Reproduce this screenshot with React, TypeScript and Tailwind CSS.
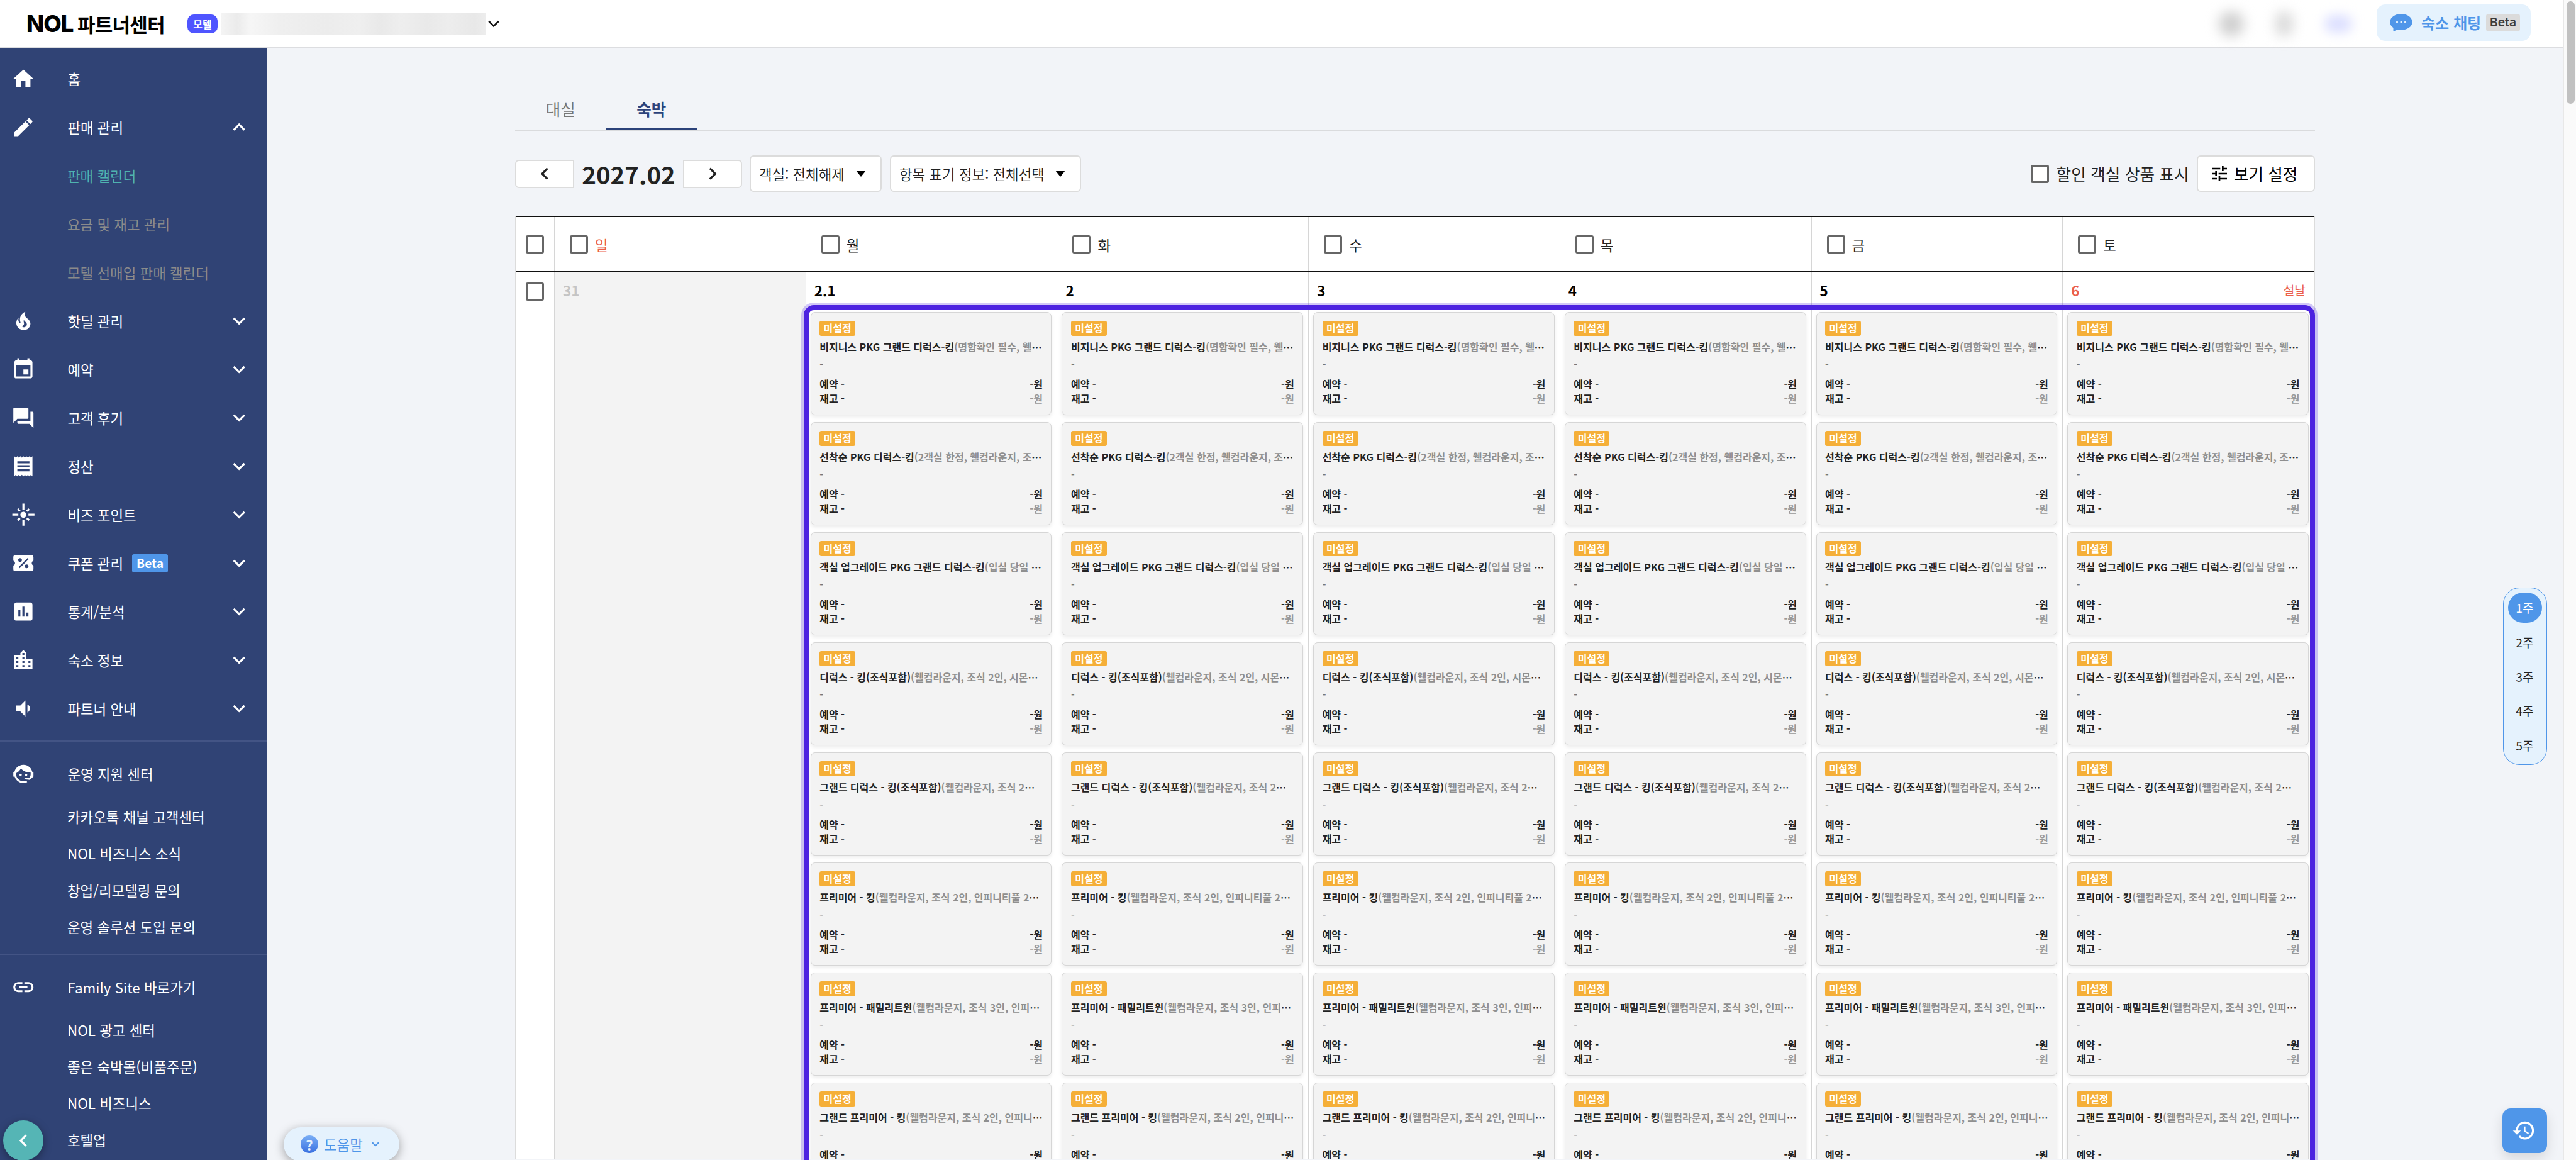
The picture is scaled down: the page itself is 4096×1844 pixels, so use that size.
import { clsx } from 'clsx'
import type { ReactNode } from 'react'
import type { IconType } from 'react-icons'
import {
  MdChevronLeft,
  MdChevronRight,
  MdEdit,
  MdEvent,
  MdExpandLess,
  MdExpandMore,
  MdFlare,
  MdForum,
  MdHistory,
  MdHome,
  MdInsertChart,
  MdLink,
  MdLocationCity,
  MdReceipt,
  MdTune,
  MdVolumeDown,
} from 'react-icons/md'

type IconComponent = IconType | ((props: { className?: string }) => ReactNode)

type MenuItem = {
  label: string
  icon: IconComponent
  expanded?: boolean
  leaf?: boolean
  beta?: boolean
  children?: { label: string; active?: boolean }[]
}

function FireIcon({ className }: { className?: string }) {
  return (
    <svg viewBox="0 0 24 24" fill="currentColor" className={className}>
      <path d="M17.66 11.2c-.23-.3-.51-.56-.77-.82-.67-.6-1.43-1.03-2.07-1.66C13.33 7.26 13 4.85 13.95 3c-.95.23-1.78.75-2.49 1.32-2.59 2.08-3.61 5.75-2.39 8.9.04.1.08.2.08.33 0 .22-.15.42-.35.5-.23.1-.47.04-.66-.12a.58.58 0 0 1-.14-.17c-1.13-1.43-1.31-3.48-.55-5.12C5.78 10 4.87 12.3 5 14.47c.06.5.12 1 .29 1.5.14.6.41 1.2.71 1.73 1.08 1.73 2.95 2.97 4.96 3.22 2.14.27 4.43-.12 6.07-1.6 1.83-1.66 2.47-4.32 1.53-6.6l-.13-.26c-.21-.46-.77-1.26-.77-1.26m-3.16 6.3c-.28.24-.74.5-1.1.6-1.12.4-2.24-.16-2.9-.82 1.19-.28 1.9-1.16 2.11-2.05.17-.8-.15-1.46-.28-2.23-.12-.74-.1-1.37.17-2.06.19.38.39.76.63 1.06.77 1 1.98 1.44 2.24 2.8.04.14.06.28.06.43.03.82-.33 1.72-.93 2.27Z" />
    </svg>
  )
}

function CouponIcon({ className }: { className?: string }) {
  return (
    <svg viewBox="0 0 24 24" fill="currentColor" className={className}>
      <path
        fillRule="evenodd"
        d="M20 4H4a2 2 0 0 0-2 2v3.6c1 .5 1.7 1.3 1.7 2.4S3 13.900 2 14.4V18a2 2 0 0 0 2 2h16a2 2 0 0 0 2-2v-3.6c-1-.5-1.7-1.3-1.7-2.4s.7-1.9 1.7-2.4V6a2 2 0 0 0-2-2ZM8.7 7a1.85 1.85 0 1 1 0 3.7 1.85 1.85 0 0 1 0-3.7Zm7.5-.1 1.1 1.1-9 9-1.1-1.1 9-9Zm-1 6.4a1.85 1.85 0 1 1 0 3.7 1.85 1.85 0 0 1 0-3.7Z"
      />
    </svg>
  )
}

function AgentIcon({ className }: { className?: string }) {
  return (
    <svg viewBox="0 0 24 24" fill="currentColor" className={className}>
      <path d="M18.72 14.76C19.07 13.91 19.26 13 19.26 12C19.26 11.28 19.15 10.59 18.96 9.95C18.31 10.1 17.63 10.18 16.92 10.18C13.86 10.18 11.15 8.67 9.5 6.34C8.61 8.5 6.91 10.26 4.77 11.22C4.73 11.47 4.73 11.74 4.73 12A7.27 7.27 0 0 0 12 19.27C13.05 19.27 14.06 19.04 14.97 18.63C15.54 19.72 15.8 20.26 15.78 20.26C14.14 20.81 12.87 21.08 12 21.08C9.58 21.08 7.27 20.13 5.57 18.42C4.53 17.38 3.76 16.11 3.33 14.73H2V10.18H3.09C3.93 6.04 7.6 2.92 12 2.92C14.4 2.92 16.71 3.87 18.42 5.58C19.69 6.84 20.54 8.45 20.89 10.18H22V14.73H21.94L18.38 18L13.08 17.4V15.73H17.91L18.72 14.76Z" />
      <circle cx="9.27" cy="13" r="1.15" />
      <circle cx="14.73" cy="13" r="1.15" />
    </svg>
  )
}

function ChatIcon({ className }: { className?: string }) {
  return (
    <svg viewBox="0 0 36 28" fill="none" className={className}>
      <path
        fill="#4F96E9"
        d="M18 0C8.2 0 .3 5.8.3 13c0 3.7 2 6.9 5.2 9.3V28l7-3c1.7.5 3.5.7 5.5.7 9.8 0 17.7-5.6 17.7-12.7S27.8 0 18 0Z"
      />
      <circle cx="11.5" cy="13" r="1.6" fill="#E5F2FD" />
      <circle cx="18" cy="13" r="1.6" fill="#E5F2FD" />
      <circle cx="24.5" cy="13" r="1.6" fill="#E5F2FD" />
    </svg>
  )
}

const menu: MenuItem[] = [
  { label: '홈', icon: MdHome, leaf: true },
  {
    label: '판매 관리',
    icon: MdEdit,
    expanded: true,
    children: [{ label: '판매 캘린더', active: true }, { label: '요금 및 재고 관리' }, { label: '모텔 선매입 판매 캘린더' }],
  },
  { label: '핫딜 관리', icon: FireIcon },
  { label: '예약', icon: MdEvent },
  { label: '고객 후기', icon: MdForum },
  { label: '정산', icon: MdReceipt },
  { label: '비즈 포인트', icon: MdFlare },
  { label: '쿠폰 관리', icon: CouponIcon, beta: true },
  { label: '통계/분석', icon: MdInsertChart },
  { label: '숙소 정보', icon: MdLocationCity },
  { label: '파트너 안내', icon: MdVolumeDown },
]

const supportLinks = ['카카오톡 채널 고객센터', 'NOL 비즈니스 소식', '창업/리모델링 문의', '운영 솔루션 도입 문의']
const familyLinks = ['NOL 광고 센터', '좋은 숙박몰(비품주문)', 'NOL 비즈니스', '호텔업']

const weekdays = ['일', '월', '화', '수', '목', '금', '토']

const days: { date: string; holiday?: string; outside?: boolean }[] = [
  { date: '31', outside: true },
  { date: '2.1' },
  { date: '2' },
  { date: '3' },
  { date: '4' },
  { date: '5' },
  { date: '6', holiday: '설날' },
]

const rooms = [
  { name: '비지니스 PKG 그랜드 디럭스-킹', desc: '(명함확인 필수, 웰컴라운지)' },
  { name: '선착순 PKG 디럭스-킹', desc: '(2객실 한정, 웰컴라운지, 조식)' },
  { name: '객실 업그레이드 PKG 그랜드 디럭스-킹', desc: '(입실 당일 업그레이드)' },
  { name: '디럭스 - 킹(조식포함)', desc: '(웰컴라운지, 조식 2인, 시몬스 침대)' },
  { name: '그랜드 디럭스 - 킹(조식포함)', desc: '(웰컴라운지, 조식 2인, 시몬스 침대)' },
  { name: '프리미어 - 킹', desc: '(웰컴라운지, 조식 2인, 인피니티풀 2인 포함)' },
  { name: '프리미어 - 패밀리트윈', desc: '(웰컴라운지, 조식 3인, 인피니티풀)' },
  { name: '그랜드 프리미어 - 킹', desc: '(웰컴라운지, 조식 2인, 인피니티풀)' },
]

const weeks = ['1주', '2주', '3주', '4주', '5주']

function Checkbox({ className }: { className?: string }) {
  return <span className={clsx('size-[29px] shrink-0 rounded-[3px] border-[3px] border-[#666] bg-white', className)} />
}

function Header() {
  return (
    <header className="flex h-[77px] shrink-0 items-center border-b-2 border-[#dcdde0] bg-white pl-[42px]">
      <div className="flex w-[256px] shrink-0 items-center text-black">
        <span className="w-[81px] text-[37px] leading-none font-extrabold tracking-[-1.2px] font-[Inter,sans-serif]">NOL</span>
        <span className="text-[31px] leading-none font-bold tracking-[-0.8px]">파트너센터</span>
      </div>
      <span className="flex h-[30px] w-12 items-center justify-center rounded-[10px] bg-[#4f55ff] text-[16px] leading-none font-bold text-white">
        모텔
      </span>
      <span className="ml-[6px] h-[34px] w-[420px] bg-[linear-gradient(90deg,#f4f4f4,#ebebeb_6%,#f6f6f6_11%,#efefef_22%,#ececec_40%,#efefef_52%,#e9e9e9_60%,#eeeeee_68%,#e9e9e9_78%,#ededed_86%,#e8e8e8_96%,#ededed)]" />
      <svg viewBox="0 0 18 12" className="ml-[4px] h-3 w-[18px]" fill="none" stroke="#111" strokeWidth="2.6">
        <path d="m1.2 1.8 7.8 7.7 7.8-7.7" />
      </svg>
      <div className="ml-auto flex items-center pr-[51px]">
        <span className="h-10 w-10 rounded-full bg-[#cfcfcf] blur-[10px]" />
        <span className="ml-[50px] h-10 w-7 rounded-full bg-[#dadada] blur-[10px]" />
        <span className="ml-[50px] h-7 w-11 rounded-full bg-[#dcdfff] blur-[9px]" />
        <span className="ml-[25px] h-8 w-px bg-[#d6d6d6]" />
        <button type="button" className="mb-[3px] ml-[13px] flex h-[58px] w-[245px] items-center rounded-[14px] bg-[#e5f2fd] pl-[21px]">
          <ChatIcon className="h-7 w-9" />
          <span className="ml-[14px] text-[24px] leading-none font-bold text-[#4f96e9]">숙소 채팅</span>
          <span className="ml-[8px] flex h-7 w-[54px] items-center justify-center rounded-[4px] bg-[#dbdbdb] text-[19.2px] leading-none font-semibold text-[#3c3c3c] font-[Inter,sans-serif]">
            Beta
          </span>
        </button>
      </div>
    </header>
  )
}

function SectionTitle({ icon: Icon, label }: { icon: IconComponent; label: string }) {
  return (
    <div className="flex h-[77px] items-center pl-[18px]">
      <Icon className="size-[38.4px]" />
      <span className="ml-[51px]">{label}</span>
    </div>
  )
}

function Sidebar() {
  return (
    <aside className="relative w-[425px] shrink-0 overflow-hidden bg-[#304375] pt-[10px] text-[22.4px] leading-none text-white">
      <nav>
        {menu.map((item) => {
          const Icon = item.icon
          return (
            <div key={item.label}>
              <div className="flex h-[77px] items-center pr-[26px] pl-[18px]">
                <Icon className="size-[38.4px] shrink-0" />
                <span className="ml-[51px]">{item.label}</span>
                {item.beta && (
                  <span className="ml-[14px] flex h-[29px] w-[57px] items-center justify-center rounded-[3px] bg-[#4f96e9] text-[19.2px] font-bold">
                    Beta
                  </span>
                )}
                {!item.leaf &&
                  (item.expanded ? (
                    <MdExpandLess className="ml-auto size-[38.4px]" />
                  ) : (
                    <MdExpandMore className="ml-auto size-[38.4px]" />
                  ))}
              </div>
              {item.children?.map((child) => (
                <div
                  key={child.label}
                  className={clsx('flex h-[77px] items-center pl-[107px]', child.active ? 'text-[#4fb3b0]' : 'text-[#8b8b8b]')}
                >
                  {child.label}
                </div>
              ))}
            </div>
          )
        })}
      </nav>
      <div className="mt-[12px] border-t-2 border-[#435485] pt-[13px]">
        <SectionTitle icon={AgentIcon} label="운영 지원 센터" />
        {supportLinks.map((label) => (
          <div key={label} className="flex h-[58.4px] items-center pl-[107px]">
            {label}
          </div>
        ))}
      </div>
      <div className="mt-[13px] border-t-2 border-[#435485] pt-[13px]">
        <SectionTitle icon={MdLink} label="Family Site 바로가기" />
        {familyLinks.map((label) => (
          <div key={label} className="flex h-[58.4px] items-center pl-[107px]">
            {label}
          </div>
        ))}
      </div>
      <button
        type="button"
        className="absolute bottom-[-1px] left-[5px] flex size-16 items-center justify-center rounded-full bg-[#55b5b5] shadow-[0_4px_14px_rgba(0,0,0,0.35)]"
      >
        <MdChevronLeft className="size-[38.4px]" />
      </button>
    </aside>
  )
}

function Select({ label, className }: { label: string; className?: string }) {
  return (
    <button
      type="button"
      className={clsx(
        'flex h-[58px] items-center justify-between rounded-[6px] border-2 border-[#dcdcdc] bg-white pr-[23px] pl-[13px] text-[22.4px] leading-none font-[350] text-[#222]',
        className,
      )}
    >
      {label}
      <svg viewBox="0 0 16 10" className="h-[9px] w-4" fill="#000">
        <path d="M0 0h16L8 10Z" />
      </svg>
    </button>
  )
}

function Toolbar() {
  return (
    <div className="mt-[38px] flex h-[58px] items-center">
      <button type="button" className="flex h-[45px] w-[94px] items-center justify-center rounded-l-[6px] border-2 border-[#dcdcdc] bg-white">
        <MdChevronLeft className="size-[38.4px]" />
      </button>
      <strong className="w-[173px] text-center text-[38.4px] leading-none font-bold text-[#222]">2027.02</strong>
      <button type="button" className="flex h-[45px] w-[94px] items-center justify-center rounded-r-[6px] border-2 border-[#dcdcdc] bg-white">
        <MdChevronRight className="size-[38.4px]" />
      </button>
      <Select label="객실: 전체해제" className="ml-[12px] w-[210px]" />
      <Select label="항목 표기 정보: 전체선택" className="ml-[13px] w-[304px]" />
      <label className="ml-auto flex items-center text-[25.6px] leading-none tracking-[0.15px] text-[#222]">
        <Checkbox className="mr-[11px]" />
        할인 객실 상품 표시
      </label>
      <button
        type="button"
        className="ml-[12px] flex h-[58px] w-[188px] items-center rounded-[6px] border-2 border-[#dcdcdc] bg-white pl-[18px] text-[25.6px] leading-none text-black"
      >
        <MdTune className="mr-[7px] size-8" />
        보기 설정
      </button>
    </div>
  )
}

function RoomCard({ name, desc }: { name: string; desc: string }) {
  return (
    <article className="h-[164px] rounded-[7px] border border-[#d6d6d6] bg-[#f3f3f3] px-[13.5px] pt-[13px] text-[16px] leading-[23.4px] font-bold text-[#222] shadow-[0_3px_6px_rgba(0,0,0,0.08)]">
      <span className="flex h-[24px] w-[57px] items-center justify-center rounded-[3px] bg-[#f5af38] text-white">미설정</span>
      <p className="mt-[6px] truncate">
        {name}
        <span className="text-[#8f8f8f]">{desc}</span>
      </p>
      <p className="mt-[5px] font-medium text-[#777]">-</p>
      <div className="mt-[7px] flex justify-between">
        <span>예약 -</span>
        <span>-원</span>
      </div>
      <div className="flex justify-between">
        <span>재고 -</span>
        <span className="text-[#999]">-원</span>
      </div>
    </article>
  )
}

function Calendar() {
  return (
    <section className="relative mt-[38px] w-[2862px] border-x-2 border-t-2 border-x-[#dcdcdc] border-t-[#111] bg-white">
      <div className="grid h-[88px] grid-cols-[60px_repeat(7,1fr)] border-b-2 border-[#111]">
        <div className="flex items-center pl-[15px]">
          <Checkbox />
        </div>
        {weekdays.map((day) => (
          <div
            key={day}
            className={clsx(
              'flex items-center border-l border-[#d6d6d6] pl-[24px] text-[22.4px] leading-none',
              day === '일' ? 'text-[#eb5f4b]' : 'text-[#222]',
            )}
          >
            <Checkbox className="mr-[11px]" />
            <span className="pt-[3px]">{day}</span>
          </div>
        ))}
      </div>
      <div className="grid h-[1410px] grid-cols-[60px_repeat(7,1fr)] overflow-hidden">
        <div className="flex items-start pt-[16px] pl-[15px]">
          <Checkbox />
        </div>
        {days.map((day) => (
          <div key={day.date} className={clsx('min-w-0 border-l border-[#d6d6d6]', day.outside && 'bg-[#f3f3f3]')}>
            <div
              className={clsx(
                'flex h-[63px] items-center justify-between pr-[13px] pb-[6px] pl-[13px] text-[22.4px] leading-none font-bold',
                day.outside ? 'text-[#c4c4c4]' : day.holiday ? 'text-[#eb5f4b]' : 'text-black',
              )}
            >
              {day.date}
              {day.holiday && <span className="text-[19.2px] font-normal">{day.holiday}</span>}
            </div>
            {!day.outside && (
              <div className="flex flex-col gap-[11px] pr-[8px] pl-[7px]">
                {rooms.map((room) => (
                  <RoomCard key={room.name} {...room} />
                ))}
              </div>
            )}
          </div>
        ))}
      </div>
      {/* highlight around the selected days, it runs on below the fold */}
      <div className="absolute top-[140px] right-[-2px] -bottom-6 left-[457px] rounded-[16px] border-8 border-[#4c22e0] ring-4 ring-[#4c22e0]/25" />
    </section>
  )
}

export default function App() {
  return (
    <div
      lang="ko"
      className="relative flex h-[1844px] w-[4096px] overflow-hidden bg-[#f2f4f8] font-['Noto_Sans_CJK_KR',sans-serif] text-[#222]"
    >
      <div className="flex min-w-0 flex-1 flex-col">
        <Header />
        <div className="flex min-h-0 flex-1">
          <Sidebar />
          <main className="min-w-0 flex-1 pl-[394px]">
            <div className="mt-[61px] flex h-[71px] w-[2862px] border-b-2 border-[#dadbdd] text-[25.6px] leading-none">
              <span className="flex w-[144.5px] items-center justify-center text-[#777]">대실</span>
              <span className="flex w-[144.5px] items-center justify-center border-b-4 border-[#2c427a] pt-[4px] font-bold text-[#2c427a]">
                숙박
              </span>
            </div>
            <div className="w-[2862px]">
              <Toolbar />
            </div>
            <Calendar />
          </main>
        </div>
      </div>
      <div className="w-[21px] shrink-0 border-l-2 border-[#e8e8e8] bg-[#fafafa] pt-[2px] pl-[4px]">
        <div className="h-[163px] w-[13px] rounded-full bg-[#c1c1c1]" />
      </div>

      <button
        type="button"
        className="absolute bottom-[-2px] left-[451px] flex h-[54px] w-[184px] items-center rounded-[27px] bg-[#e5f2fd] pl-[27px] text-[22.4px] leading-none text-[#4f96e9] shadow-[0_4px_16px_rgba(0,0,0,0.35)]"
      >
        <span className="flex size-7 items-center justify-center rounded-full bg-linear-to-b from-[#7aaef5] to-[#3a70e0] text-[22px] font-bold text-[#e5f2fd]">
          ?
        </span>
        <span className="ml-[9px]">도움말</span>
        <svg viewBox="0 0 12 8" className="ml-[14px] h-2 w-3" fill="none" stroke="currentColor" strokeWidth="2">
          <path d="m1 1.2 5 5 5-5" />
        </svg>
      </button>

      <div className="absolute top-[934px] right-[46px] flex w-[70px] flex-col gap-[6.6px] rounded-[26px] border border-[#4f96e9] bg-[#e5f2fd] p-[7px] text-[19.2px] leading-none">
        {weeks.map((week, i) => (
          <span
            key={week}
            className={clsx('flex h-12 items-center justify-center rounded-[24px] pt-[2px] pr-[1px]', i === 0 && 'bg-[#4f96e9] text-white')}
          >
            {week}
          </span>
        ))}
      </div>
      <button
        type="button"
        className="absolute top-[1762px] right-[46px] flex size-[71px] items-center justify-center rounded-[13px] bg-[#4f96e9] pr-[2px] text-white shadow-[0_8px_20px_rgba(0,0,0,0.12)]"
      >
        <MdHistory className="size-[38.4px]" />
      </button>
    </div>
  )
}
